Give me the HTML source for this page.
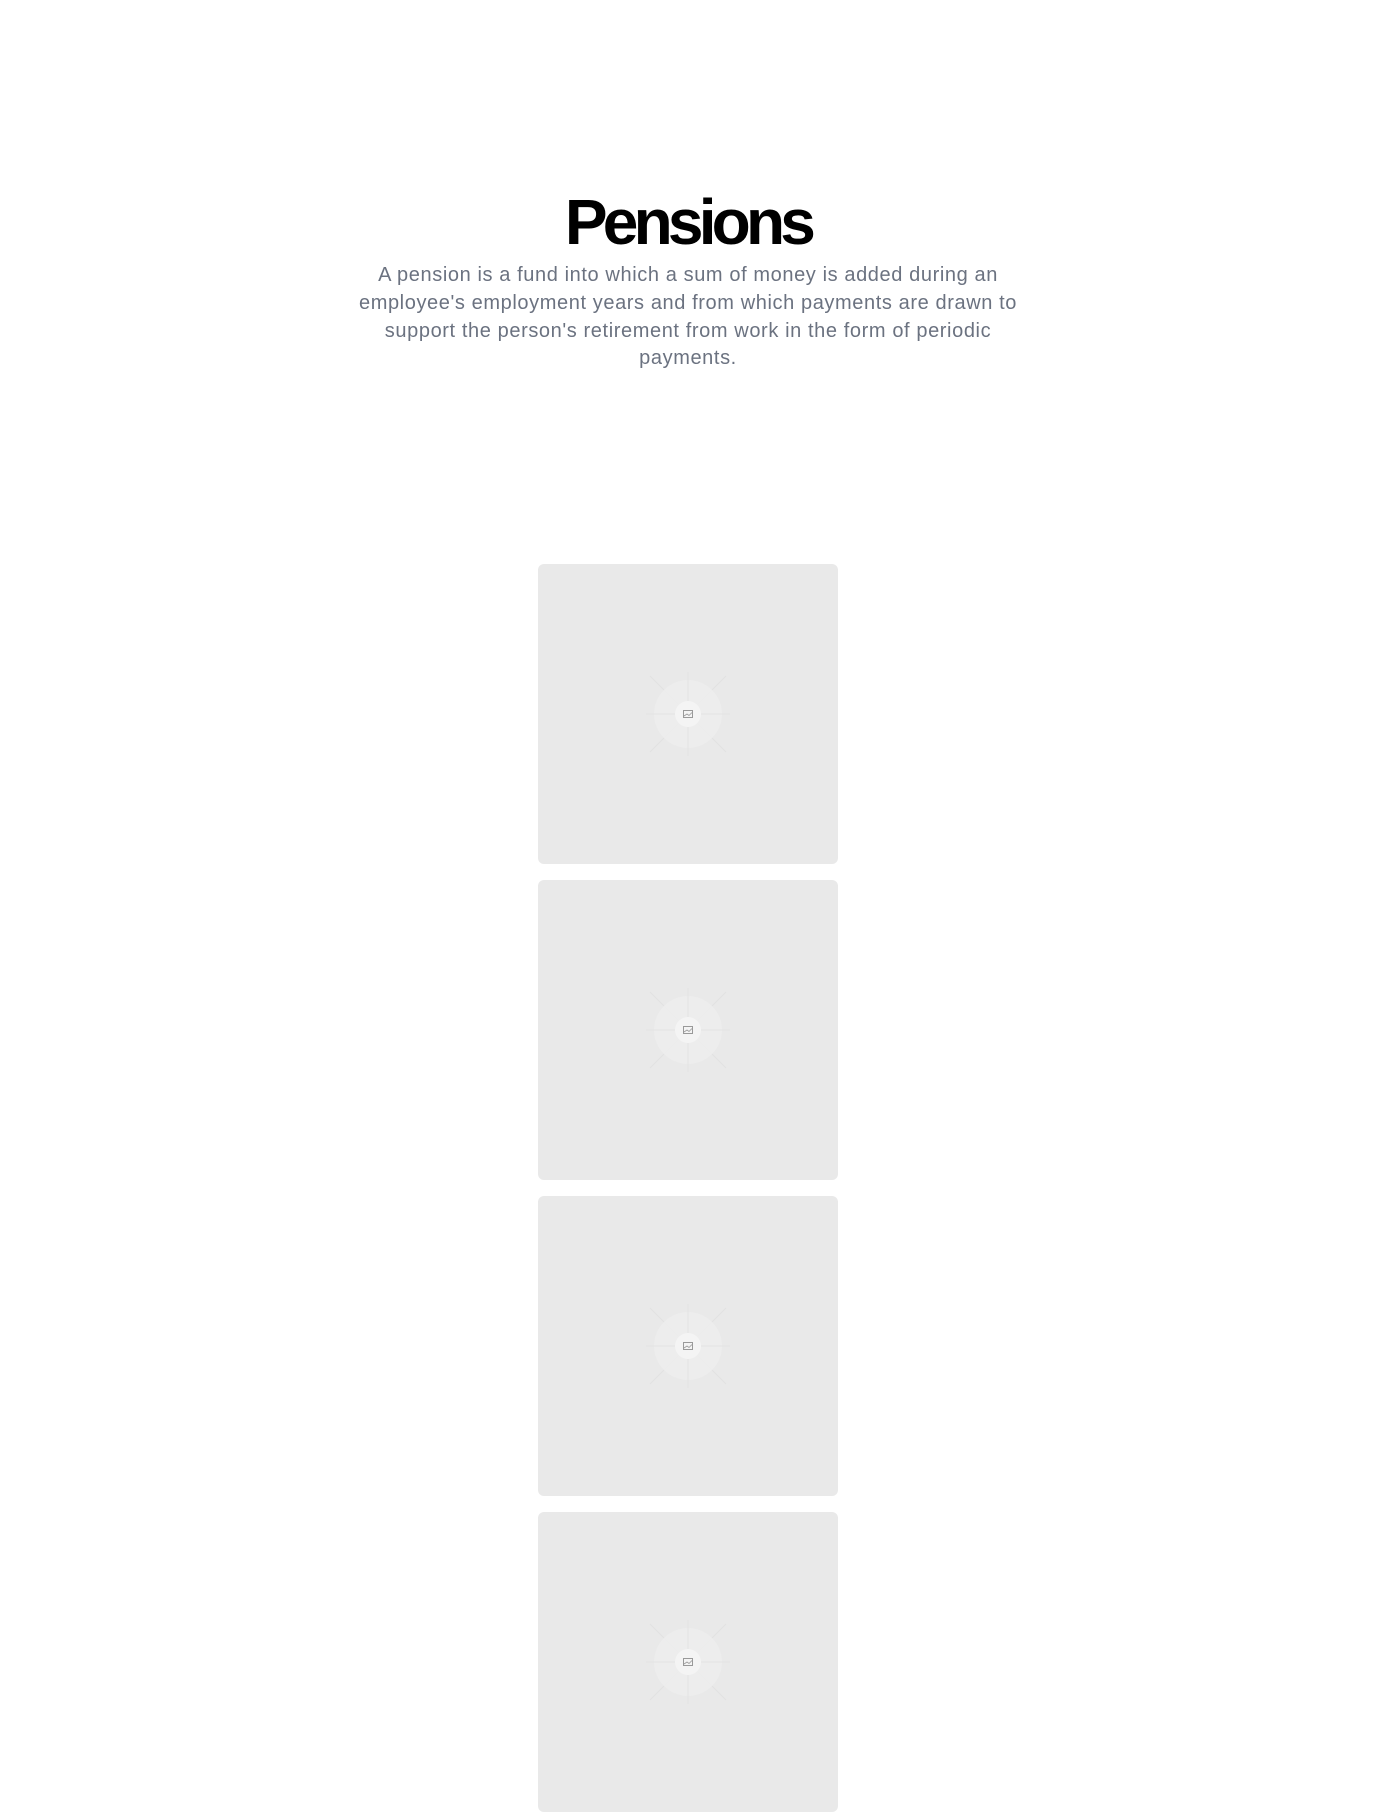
<!DOCTYPE html>
<html><head><meta charset="utf-8"><style>
html,body{margin:0;padding:0;background:#fff;width:1376px;height:1812px;overflow:hidden;font-family:"Liberation Sans",sans-serif}
h1{position:absolute;top:184px;left:0;width:1376px;margin:0;text-align:center;font-size:64px;line-height:76px;font-weight:700;letter-spacing:-0.075em;color:#000}
p{position:absolute;top:262px;left:0;width:1376px;margin:0;text-align:center;font-size:20px;letter-spacing:0.6px;line-height:27.8px;color:#6b7280;white-space:nowrap}
.card{position:absolute;left:538px;width:300px;height:300px;background:#e9e9e9;border-radius:6px}
.card svg{position:absolute;left:100px;top:100px}
</style></head><body>
<h1>Pensions</h1>
<p>A pension is a fund into which a sum of money is added during an<br>employee's employment years and from which payments are drawn to<br>support the person's retirement from work in the form of periodic<br>payments.</p>
<div class="card" style="top:564px"><svg width="100" height="100" viewBox="0 0 100 100"><g stroke="#e2e2e2" stroke-width="1"><line x1="50" y1="8" x2="50" y2="92"/><line x1="8" y1="50" x2="92" y2="50"/><line x1="12" y1="12" x2="88" y2="88"/><line x1="88" y1="12" x2="12" y2="88"/></g><circle cx="50" cy="50" r="34" fill="#ededed" opacity=".85"/><g stroke="#e4e4e4"><line x1="50" y1="16" x2="50" y2="84"/><line x1="16" y1="50" x2="84" y2="50"/></g><circle cx="50" cy="50" r="13" fill="#f4f4f4"/><rect x="45.5" y="46.5" width="9" height="7" fill="none" stroke="#999" stroke-width="1"/><path d="M46 52l3-2 2 1.5 3-3" fill="none" stroke="#999" stroke-width=".8"/></svg></div>
<div class="card" style="top:880px"><svg width="100" height="100" viewBox="0 0 100 100"><g stroke="#e2e2e2" stroke-width="1"><line x1="50" y1="8" x2="50" y2="92"/><line x1="8" y1="50" x2="92" y2="50"/><line x1="12" y1="12" x2="88" y2="88"/><line x1="88" y1="12" x2="12" y2="88"/></g><circle cx="50" cy="50" r="34" fill="#ededed" opacity=".85"/><g stroke="#e4e4e4"><line x1="50" y1="16" x2="50" y2="84"/><line x1="16" y1="50" x2="84" y2="50"/></g><circle cx="50" cy="50" r="13" fill="#f4f4f4"/><rect x="45.5" y="46.5" width="9" height="7" fill="none" stroke="#999" stroke-width="1"/><path d="M46 52l3-2 2 1.5 3-3" fill="none" stroke="#999" stroke-width=".8"/></svg></div>
<div class="card" style="top:1196px"><svg width="100" height="100" viewBox="0 0 100 100"><g stroke="#e2e2e2" stroke-width="1"><line x1="50" y1="8" x2="50" y2="92"/><line x1="8" y1="50" x2="92" y2="50"/><line x1="12" y1="12" x2="88" y2="88"/><line x1="88" y1="12" x2="12" y2="88"/></g><circle cx="50" cy="50" r="34" fill="#ededed" opacity=".85"/><g stroke="#e4e4e4"><line x1="50" y1="16" x2="50" y2="84"/><line x1="16" y1="50" x2="84" y2="50"/></g><circle cx="50" cy="50" r="13" fill="#f4f4f4"/><rect x="45.5" y="46.5" width="9" height="7" fill="none" stroke="#999" stroke-width="1"/><path d="M46 52l3-2 2 1.5 3-3" fill="none" stroke="#999" stroke-width=".8"/></svg></div>
<div class="card" style="top:1512px"><svg width="100" height="100" viewBox="0 0 100 100"><g stroke="#e2e2e2" stroke-width="1"><line x1="50" y1="8" x2="50" y2="92"/><line x1="8" y1="50" x2="92" y2="50"/><line x1="12" y1="12" x2="88" y2="88"/><line x1="88" y1="12" x2="12" y2="88"/></g><circle cx="50" cy="50" r="34" fill="#ededed" opacity=".85"/><g stroke="#e4e4e4"><line x1="50" y1="16" x2="50" y2="84"/><line x1="16" y1="50" x2="84" y2="50"/></g><circle cx="50" cy="50" r="13" fill="#f4f4f4"/><rect x="45.5" y="46.5" width="9" height="7" fill="none" stroke="#999" stroke-width="1"/><path d="M46 52l3-2 2 1.5 3-3" fill="none" stroke="#999" stroke-width=".8"/></svg></div>
</body></html>
